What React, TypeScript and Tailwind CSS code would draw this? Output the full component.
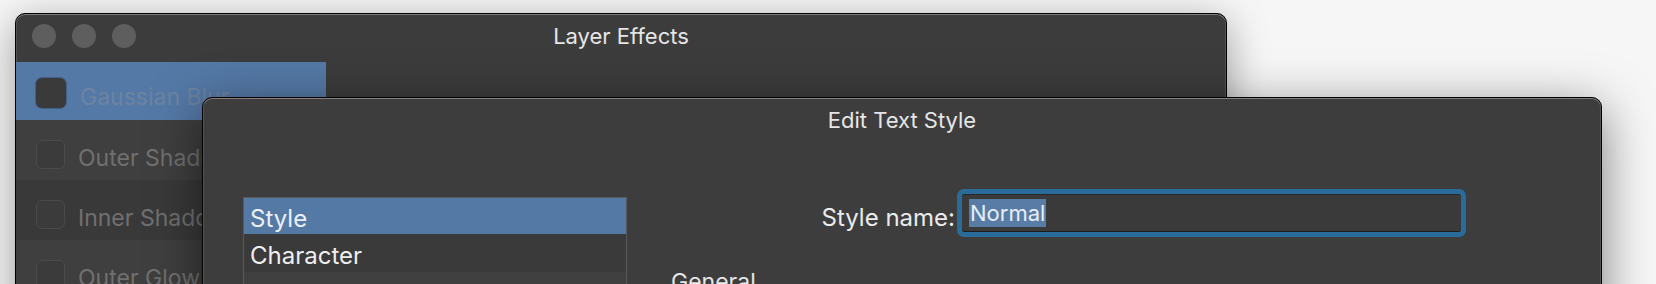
export default function App() {
  const rows = [
    { label: "Outer Shadow", bg: "bg-[#3f3f3f]" },
    { label: "Inner Shadow", bg: "bg-[#393939]" },
    { label: "Outer Glow", bg: "bg-[#3f3f3f]" },
  ];
  return (
    <div className="relative w-[1656px] h-[284px] overflow-hidden bg-[#f6f6f6] font-['Inter',sans-serif]">
      {/* Layer Effects window */}
      <div className="absolute left-[15px] top-[13px] w-[1212px] h-[340px] rounded-[10px] bg-[#3c3c3c] border border-black shadow-[inset_0_1px_0_rgba(255,255,255,0.25),inset_0_0_0_1px_rgba(255,255,255,0.12),0_10px_40px_rgba(0,0,0,0.38)] overflow-hidden flex flex-col">
        <div className="h-[48px] shrink-0 grid grid-cols-[1fr_auto_1fr] items-start">
          <div className="flex gap-[16px] pl-[16px] pt-[10px]">
            <div className="w-[24px] h-[24px] rounded-full bg-[#5e5e5e]" />
            <div className="w-[24px] h-[24px] rounded-full bg-[#5e5e5e]" />
            <div className="w-[24px] h-[24px] rounded-full bg-[#5e5e5e]" />
          </div>
          <div className="pt-[8px] text-[22px] leading-[28px] text-[#e6e6e6]">Layer Effects</div>
          <div />
        </div>
        <div className="w-[310px] flex flex-col">
          <div className="h-[58px] flex items-start bg-[#5479a6]">
            <div className="mt-[16px] ml-[20px] w-[30px] h-[30px] rounded-[6px] bg-[#3a3a3a] shadow-[0_0_0_1px_rgba(0,0,0,0.2)]" />
            <span className="mt-[21px] ml-[14px] text-[23px] leading-[28px] text-[#6d83a1]">Gaussian Blur</span>
          </div>
          {rows.map((r) => (
            <div key={r.label} className={`h-[60px] flex items-start ${r.bg}`}>
              <div className="mt-[20px] ml-[20px] w-[29px] h-[29px] rounded-[6px] border border-[#4a4a4a] bg-[#3b3b3b]" />
              <span className="mt-[24px] ml-[13px] text-[23px] leading-[28px] text-[#707070]">{r.label}</span>
            </div>
          ))}
        </div>
      </div>

      {/* Edit Text Style dialog */}
      <div className="absolute left-[202px] top-[97px] w-[1400px] h-[260px] rounded-[10px] bg-[#3d3d3d] border border-black shadow-[inset_0_1px_0_rgba(255,255,255,0.25),inset_0_0_0_1px_rgba(255,255,255,0.12),0_12px_50px_rgba(0,0,0,0.5)] overflow-hidden flex flex-col">
        <div className="h-[44px] shrink-0 flex items-center justify-center text-[22px] text-[#e6e6e6]">
          Edit Text Style
        </div>
        <div className="flex items-start pl-[40px]">
          <div className="mt-[55px] w-[384px] border border-[#5a5a5a] bg-[#393939] flex flex-col">
            <div className="h-[36px] flex items-center pt-[6px] px-[6px] bg-[#5579a5] text-[24px] text-[#eaf0f7]">Style</div>
            <div className="h-[38px] flex items-center pt-[6px] px-[6px] bg-[#3a3a3a] text-[24px] text-[#efefef]">Character</div>
            <div className="h-[38px] bg-[#404040]" />
          </div>
          <div className="pl-[44px] flex flex-col">
            <div className="mt-[47px] flex items-center">
              <div className="mt-[10px] w-[286px] pr-[2px] text-right text-[24px] text-[#ebebeb]">Style name:</div>
              <div className="w-[509px] h-[48px] rounded-[7px] border-[5px] border-[#2a6c99] bg-[#3a3a3a] shadow-[inset_0_-1px_0_rgba(0,0,0,0.5),inset_0_1px_0_rgba(0,0,0,0.3)] flex items-center pl-[7px]">
                <span className="bg-[#587ca6] h-[28px] leading-[28px] px-[1px] text-[22px] text-[#e6edf6]">Normal</span>
              </div>
            </div>
            <div className="mt-[31px] text-[23px] leading-[28px] text-[#e6e6e6]">General</div>
          </div>
        </div>
      </div>
    </div>
  );
}
